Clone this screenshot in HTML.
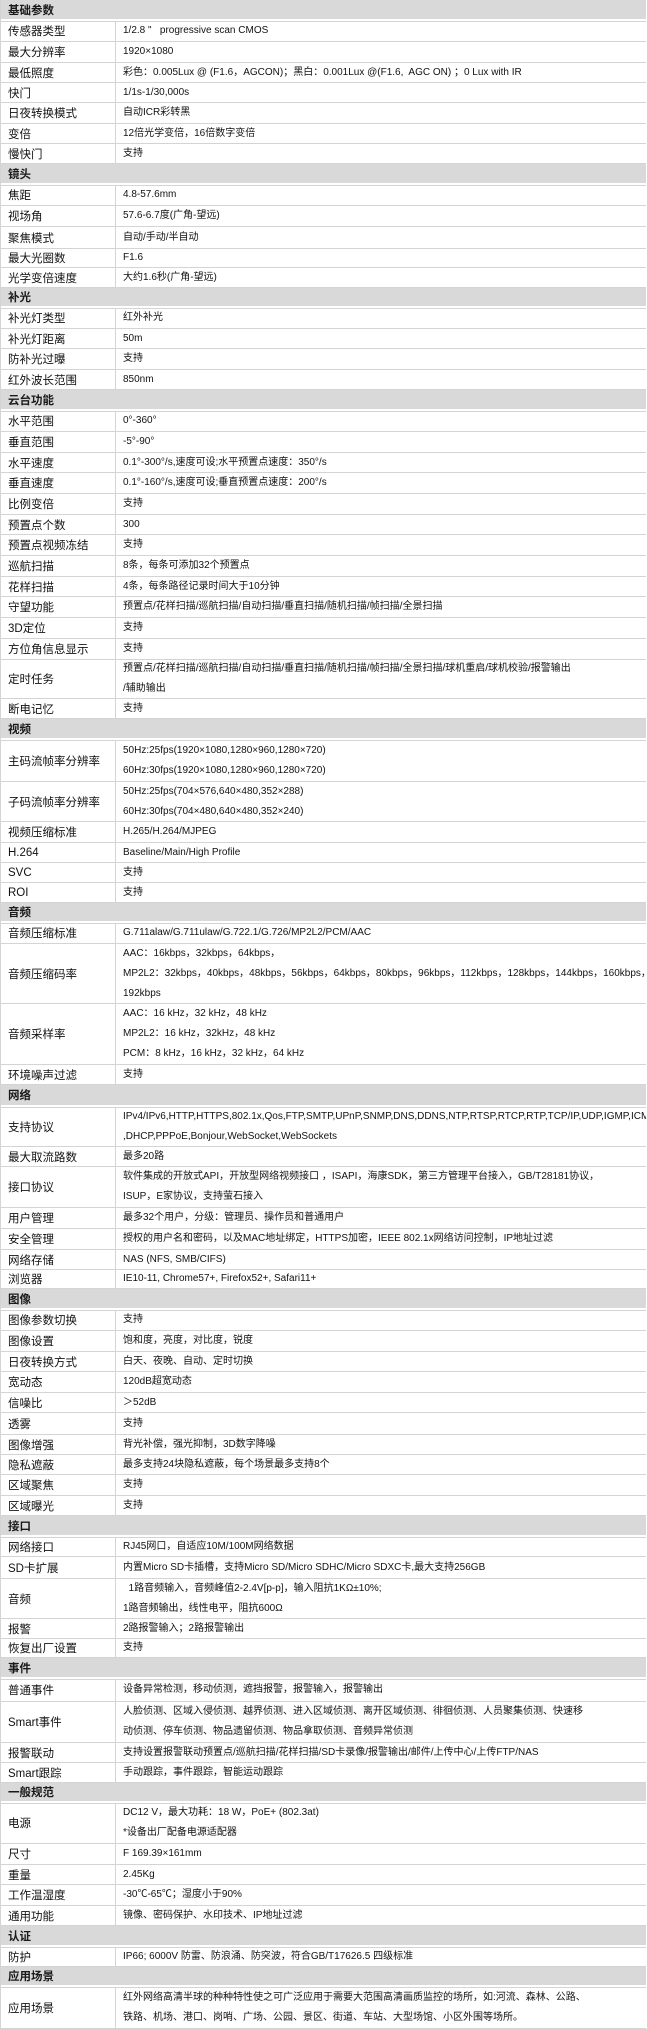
<!DOCTYPE html>
<html><head><meta charset="utf-8">
<style>
*{margin:0;padding:0;box-sizing:border-box}
body{width:647px;height:2029px;background:#fff;font-family:"Liberation Sans","Noto Sans CJK SC",sans-serif;color:#1a1a1a;overflow:hidden}
.t{width:646px;border-left:1px solid #d4d4d4}
.r{display:flex;border-bottom:1px solid #d4d4d4;overflow:hidden}
.h{background:#d9d9d9;font-weight:bold;font-size:11.5px;padding-left:7px;display:flex;align-items:center;border-bottom:2px solid #fff;box-shadow:0 1px 0 #d4d4d4}
.l{width:115px;flex:none;border-right:1px solid #d4d4d4;padding-left:7px;display:flex;align-items:center;font-size:11.5px;white-space:nowrap;color:#111}
.v{flex:1;padding-left:7px;display:flex;flex-direction:column;justify-content:center;font-size:10px;white-space:nowrap;overflow:hidden;line-height:20px;color:#111}
</style></head><body><div class="t">
<div class="h" style="height:21px">基础参数</div>
<div class="r" style="height:21px"><div class="l">传感器类型</div><div class="v">1/2.8 "&nbsp;&nbsp; progressive scan CMOS</div></div>
<div class="r" style="height:21px"><div class="l">最大分辨率</div><div class="v">1920×1080</div></div>
<div class="r" style="height:20px"><div class="l">最低照度</div><div class="v">彩色：0.005Lux @ (F1.6，AGCON)；黑白：0.001Lux @(F1.6,&nbsp; AGC ON) ；0 Lux with IR</div></div>
<div class="r" style="height:20px"><div class="l">快门</div><div class="v">1/1s-1/30,000s</div></div>
<div class="r" style="height:21px"><div class="l">日夜转换模式</div><div class="v">自动ICR彩转黑</div></div>
<div class="r" style="height:20px"><div class="l">变倍</div><div class="v">12倍光学变倍，16倍数字变倍</div></div>
<div class="r" style="height:20px"><div class="l">慢快门</div><div class="v">支持</div></div>
<div class="h" style="height:21px">镜头</div>
<div class="r" style="height:21px"><div class="l">焦距</div><div class="v">4.8-57.6mm</div></div>
<div class="r" style="height:21px"><div class="l">视场角</div><div class="v">57.6-6.7度(广角-望远)</div></div>
<div class="r" style="height:22px"><div class="l">聚焦模式</div><div class="v">自动/手动/半自动</div></div>
<div class="r" style="height:19px"><div class="l">最大光圈数</div><div class="v">F1.6</div></div>
<div class="r" style="height:20px"><div class="l">光学变倍速度</div><div class="v">大约1.6秒(广角-望远)</div></div>
<div class="h" style="height:20px">补光</div>
<div class="r" style="height:21px"><div class="l">补光灯类型</div><div class="v">红外补光</div></div>
<div class="r" style="height:20px"><div class="l">补光灯距离</div><div class="v">50m</div></div>
<div class="r" style="height:21px"><div class="l">防补光过曝</div><div class="v">支持</div></div>
<div class="r" style="height:20px"><div class="l">红外波长范围</div><div class="v">850nm</div></div>
<div class="h" style="height:21px">云台功能</div>
<div class="r" style="height:21px"><div class="l">水平范围</div><div class="v">0°-360°</div></div>
<div class="r" style="height:21px"><div class="l">垂直范围</div><div class="v">-5°-90°</div></div>
<div class="r" style="height:20px"><div class="l">水平速度</div><div class="v">0.1°-300°/s,速度可设;水平预置点速度：350°/s</div></div>
<div class="r" style="height:21px"><div class="l">垂直速度</div><div class="v">0.1°-160°/s,速度可设;垂直预置点速度：200°/s</div></div>
<div class="r" style="height:21px"><div class="l">比例变倍</div><div class="v">支持</div></div>
<div class="r" style="height:20px"><div class="l">预置点个数</div><div class="v">300</div></div>
<div class="r" style="height:21px"><div class="l">预置点视频冻结</div><div class="v">支持</div></div>
<div class="r" style="height:21px"><div class="l">巡航扫描</div><div class="v">8条，每条可添加32个预置点</div></div>
<div class="r" style="height:20px"><div class="l">花样扫描</div><div class="v">4条，每条路径记录时间大于10分钟</div></div>
<div class="r" style="height:21px"><div class="l">守望功能</div><div class="v">预置点/花样扫描/巡航扫描/自动扫描/垂直扫描/随机扫描/帧扫描/全景扫描</div></div>
<div class="r" style="height:21px"><div class="l">3D定位</div><div class="v">支持</div></div>
<div class="r" style="height:21px"><div class="l">方位角信息显示</div><div class="v">支持</div></div>
<div class="r" style="height:39px"><div class="l">定时任务</div><div class="v"><div>预置点/花样扫描/巡航扫描/自动扫描/垂直扫描/随机扫描/帧扫描/全景扫描/球机重启/球机校验/报警输出</div><div>/辅助输出</div></div></div>
<div class="r" style="height:20px"><div class="l">断电记忆</div><div class="v">支持</div></div>
<div class="h" style="height:21px">视频</div>
<div class="r" style="height:42px"><div class="l">主码流帧率分辨率</div><div class="v"><div>50Hz:25fps(1920×1080,1280×960,1280×720)</div><div>60Hz:30fps(1920×1080,1280×960,1280×720)</div></div></div>
<div class="r" style="height:40px"><div class="l">子码流帧率分辨率</div><div class="v"><div>50Hz:25fps(704×576,640×480,352×288)</div><div>60Hz:30fps(704×480,640×480,352×240)</div></div></div>
<div class="r" style="height:21px"><div class="l">视频压缩标准</div><div class="v">H.265/H.264/MJPEG</div></div>
<div class="r" style="height:20px"><div class="l">H.264</div><div class="v">Baseline/Main/High Profile</div></div>
<div class="r" style="height:20px"><div class="l">SVC</div><div class="v">支持</div></div>
<div class="r" style="height:20px"><div class="l">ROI</div><div class="v">支持</div></div>
<div class="h" style="height:20px">音频</div>
<div class="r" style="height:21px"><div class="l">音频压缩标准</div><div class="v">G.711alaw/G.711ulaw/G.722.1/G.726/MP2L2/PCM/AAC</div></div>
<div class="r" style="height:60px"><div class="l">音频压缩码率</div><div class="v"><div>AAC：16kbps，32kbps，64kbps，</div><div>MP2L2：32kbps，40kbps，48kbps，56kbps，64kbps，80kbps，96kbps，112kbps，128kbps，144kbps，160kbps，</div><div>192kbps</div></div></div>
<div class="r" style="height:61px"><div class="l">音频采样率</div><div class="v"><div>AAC：16 kHz，32 kHz，48 kHz</div><div>MP2L2：16 kHz，32kHz，48 kHz</div><div>PCM：8 kHz，16 kHz，32 kHz，64 kHz</div></div></div>
<div class="r" style="height:20px"><div class="l">环境噪声过滤</div><div class="v">支持</div></div>
<div class="h" style="height:22px">网络</div>
<div class="r" style="height:40px"><div class="l">支持协议</div><div class="v"><div>IPv4/IPv6,HTTP,HTTPS,802.1x,Qos,FTP,SMTP,UPnP,SNMP,DNS,DDNS,NTP,RTSP,RTCP,RTP,TCP/IP,UDP,IGMP,ICMP</div><div>,DHCP,PPPoE,Bonjour,WebSocket,WebSockets</div></div></div>
<div class="r" style="height:20px"><div class="l">最大取流路数</div><div class="v">最多20路</div></div>
<div class="r" style="height:41px"><div class="l">接口协议</div><div class="v"><div>软件集成的开放式API，开放型网络视频接口 ，ISAPI，海康SDK，第三方管理平台接入，GB/T28181协议，</div><div>ISUP，E家协议，支持萤石接入</div></div></div>
<div class="r" style="height:21px"><div class="l">用户管理</div><div class="v">最多32个用户，分级：管理员、操作员和普通用户</div></div>
<div class="r" style="height:21px"><div class="l">安全管理</div><div class="v">授权的用户名和密码，以及MAC地址绑定，HTTPS加密，IEEE 802.1x网络访问控制，IP地址过滤</div></div>
<div class="r" style="height:20px"><div class="l">网络存储</div><div class="v">NAS (NFS, SMB/CIFS)</div></div>
<div class="r" style="height:19px"><div class="l">浏览器</div><div class="v">IE10-11, Chrome57+, Firefox52+, Safari11+</div></div>
<div class="h" style="height:21px">图像</div>
<div class="r" style="height:21px"><div class="l">图像参数切换</div><div class="v">支持</div></div>
<div class="r" style="height:21px"><div class="l">图像设置</div><div class="v">饱和度，亮度，对比度，锐度</div></div>
<div class="r" style="height:20px"><div class="l">日夜转换方式</div><div class="v">白天、夜晚、自动、定时切换</div></div>
<div class="r" style="height:21px"><div class="l">宽动态</div><div class="v">120dB超宽动态</div></div>
<div class="r" style="height:20px"><div class="l">信噪比</div><div class="v">＞52dB</div></div>
<div class="r" style="height:22px"><div class="l">透雾</div><div class="v">支持</div></div>
<div class="r" style="height:20px"><div class="l">图像增强</div><div class="v">背光补偿，强光抑制，3D数字降噪</div></div>
<div class="r" style="height:20px"><div class="l">隐私遮蔽</div><div class="v">最多支持24块隐私遮蔽，每个场景最多支持8个</div></div>
<div class="r" style="height:21px"><div class="l">区域聚焦</div><div class="v">支持</div></div>
<div class="r" style="height:20px"><div class="l">区域曝光</div><div class="v">支持</div></div>
<div class="h" style="height:21px">接口</div>
<div class="r" style="height:20px"><div class="l">网络接口</div><div class="v">RJ45网口，自适应10M/100M网络数据</div></div>
<div class="r" style="height:22px"><div class="l">SD卡扩展</div><div class="v">内置Micro SD卡插槽，支持Micro SD/Micro SDHC/Micro SDXC卡,最大支持256GB</div></div>
<div class="r" style="height:40px"><div class="l">音频</div><div class="v"><div>&nbsp;&nbsp;1路音频输入，音频峰值2-2.4V[p-p]，输入阻抗1KΩ±10%;</div><div>1路音频输出，线性电平，阻抗600Ω</div></div></div>
<div class="r" style="height:20px"><div class="l">报警</div><div class="v">2路报警输入；2路报警输出</div></div>
<div class="r" style="height:19px"><div class="l">恢复出厂设置</div><div class="v">支持</div></div>
<div class="h" style="height:21px">事件</div>
<div class="r" style="height:23px"><div class="l">普通事件</div><div class="v">设备异常检测，移动侦测，遮挡报警，报警输入，报警输出</div></div>
<div class="r" style="height:41px"><div class="l">Smart事件</div><div class="v"><div>人脸侦测、区域入侵侦测、越界侦测、进入区域侦测、离开区域侦测、徘徊侦测、人员聚集侦测、快速移</div><div>动侦测、停车侦测、物品遗留侦测、物品拿取侦测、音频异常侦测</div></div></div>
<div class="r" style="height:20px"><div class="l">报警联动</div><div class="v">支持设置报警联动预置点/巡航扫描/花样扫描/SD卡录像/报警输出/邮件/上传中心/上传FTP/NAS</div></div>
<div class="r" style="height:20px"><div class="l">Smart跟踪</div><div class="v">手动跟踪，事件跟踪，智能运动跟踪</div></div>
<div class="h" style="height:20px">一般规范</div>
<div class="r" style="height:41px"><div class="l">电源</div><div class="v"><div>DC12 V，最大功耗：18 W，PoE+ (802.3at)</div><div>*设备出厂配备电源适配器</div></div></div>
<div class="r" style="height:21px"><div class="l">尺寸</div><div class="v">F 169.39×161mm</div></div>
<div class="r" style="height:20px"><div class="l">重量</div><div class="v">2.45Kg</div></div>
<div class="r" style="height:21px"><div class="l">工作温湿度</div><div class="v">-30℃-65℃；湿度小于90%</div></div>
<div class="r" style="height:20px"><div class="l">通用功能</div><div class="v">镜像、密码保护、水印技术、IP地址过滤</div></div>
<div class="h" style="height:21px">认证</div>
<div class="r" style="height:20px"><div class="l">防护</div><div class="v">IP66; 6000V 防雷、防浪涌、防突波，符合GB/T17626.5 四级标准</div></div>
<div class="h" style="height:20px">应用场景</div>
<div class="r" style="height:42px"><div class="l">应用场景</div><div class="v"><div>红外网络高清半球的种种特性使之可广泛应用于需要大范围高清画质监控的场所，如:河流、森林、公路、</div><div>铁路、机场、港口、岗哨、广场、公园、景区、街道、车站、大型场馆、小区外围等场所。</div></div></div>
</div></body></html>
